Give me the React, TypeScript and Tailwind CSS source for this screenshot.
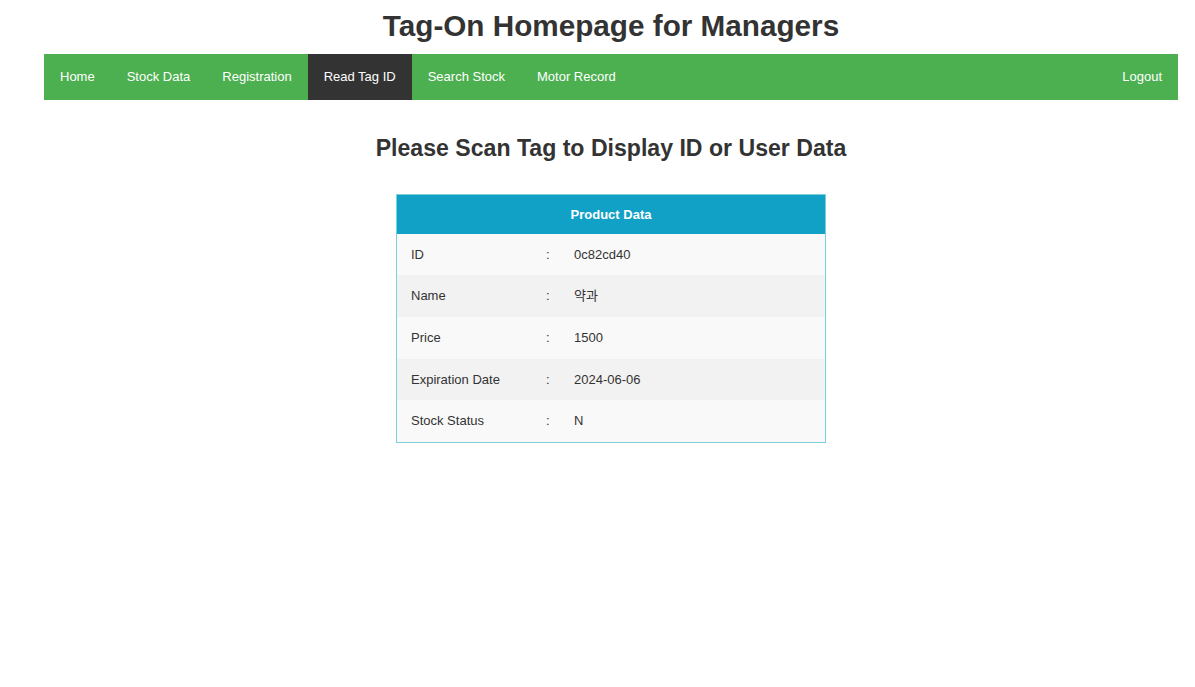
import React from 'react';

const navItems = ['Home', 'Stock Data', 'Registration', 'Read Tag ID', 'Search Stock', 'Motor Record'];

const rows: [string, string][] = [
    ['ID', '0c82cd40'],
    ['Name', '약과'],
    ['Price', '1500'],
    ['Expiration Date', '2024-06-06'],
    ['Stock Status', 'N'],
];

export default function App() {
    return (
        <div className="min-h-screen bg-white text-[#333] font-['Liberation_Sans','Noto_Sans_CJK_KR',sans-serif]">
            <div className="ml-[44px] mr-[17px]">
                <h1 className="text-center text-[29.7px] font-bold leading-none pt-[11px] pb-[13px]">
                    Tag-On Homepage for Managers
                </h1>

                {/* Navigation bar */}
                <nav className="flex h-[46px] bg-[#4caf50] text-[13px] text-white">
                    {navItems.map((item) => (
                        <a
                            key={item}
                            className={`flex items-center px-4 ${item === 'Read Tag ID' ? 'bg-[#333]' : ''}`}
                        >
                            {item}
                        </a>
                    ))}
                    <a className="ml-auto flex items-center px-4">Logout</a>
                </nav>

                <h2 className="text-center text-[23.1px] font-bold leading-none mt-[37px] mb-[34px]">
                    Please Scan Tag to Display ID or User Data
                </h2>

                {/* Product data table */}
                <div className="mx-auto w-[430px] border border-[#7ccfdb] text-[13px]">
                    <div className="flex h-[39px] items-center justify-center bg-[#12a1c6] font-bold text-white">
                        Product Data
                    </div>
                    {rows.map(([label, value], i) => (
                        <div
                            key={label}
                            className={`flex h-[41.6px] items-center pl-[14px] ${i % 2 === 0 ? 'bg-[#f9f9f9]' : 'bg-[#f2f2f2]'}`}
                        >
                            <span className="w-[135px]">{label}</span>
                            <span className="w-[28px]">:</span>
                            <span>{value}</span>
                        </div>
                    ))}
                </div>
            </div>
        </div>
    );
}
